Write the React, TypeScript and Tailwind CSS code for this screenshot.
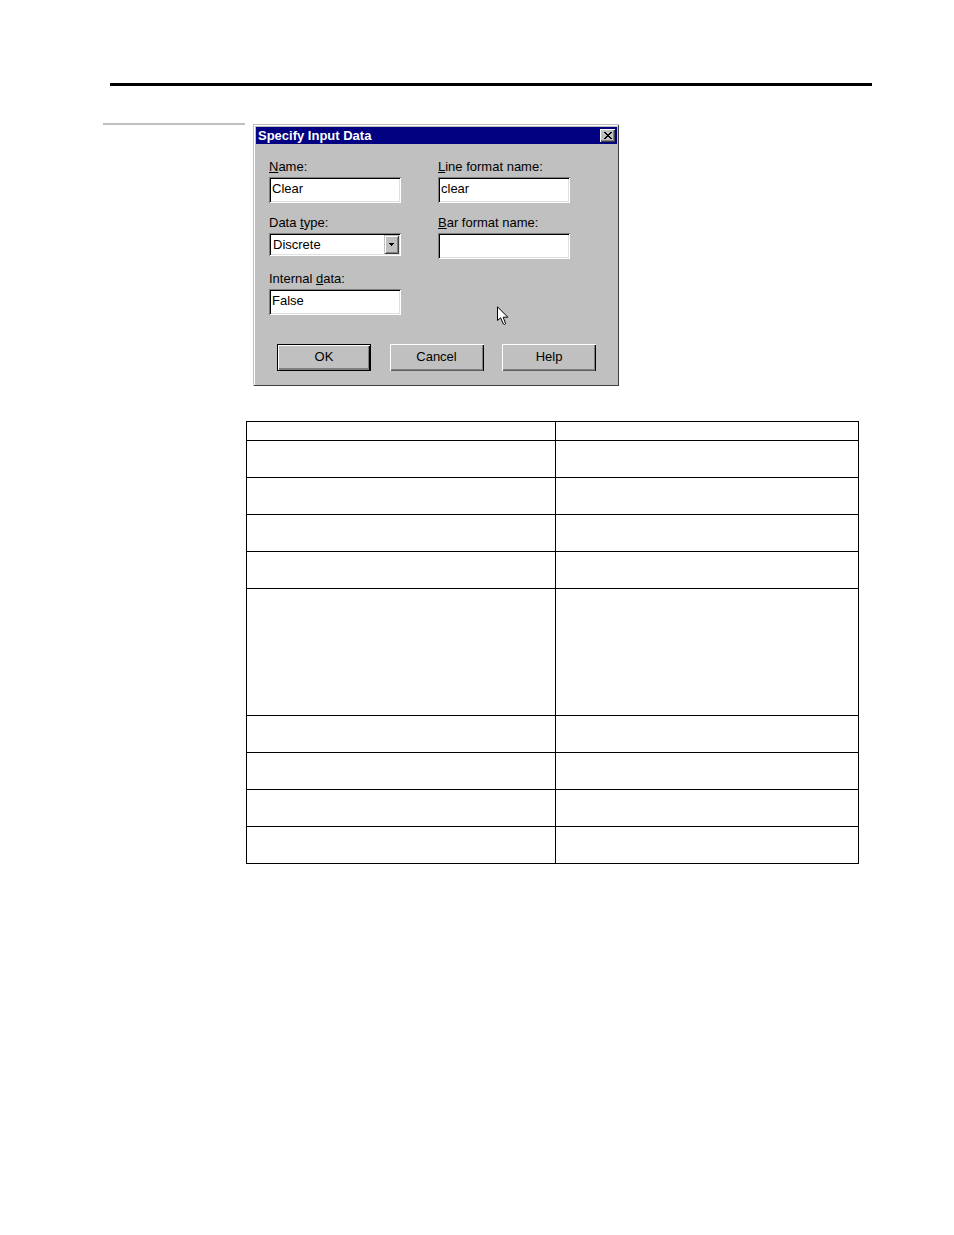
import React from "react";

const fieldClass =
  "h-[26px] w-full rounded-none bg-white pt-0 pr-1 pb-1 pl-[3px] text-[13px] leading-4 text-black outline-none shadow-[inset_1px_1px_0_#808080,inset_-1px_-1px_0_#ffffff,inset_2px_2px_0_#000000,inset_-2px_-2px_0_#dfdfdf]";

const buttonBase = "flex h-[27px] w-[94px] items-center justify-center pb-0.5 text-[13px] leading-4 text-black";
const raised =
  "shadow-[inset_1px_1px_0_#ffffff,inset_-1px_0_0_#000000,inset_0_-1px_0_#606060,inset_-2px_-2px_0_#808080]";
const raisedDefault =
  "border border-black shadow-[inset_1px_1px_0_#ffffff,inset_-1px_0_0_#000000,inset_0_-1px_0_#808080,inset_-2px_-2px_0_#808080]";

interface FieldProps {
  id: string;
  label: React.ReactNode;
  children: React.ReactNode;
}

function Field({ id, label, children }: FieldProps) {
  return (
    <div className="flex flex-col gap-0.5">
      <label htmlFor={id} className="text-[13px] leading-4">
        {label}
      </label>
      {children}
    </div>
  );
}

function Pointer() {
  return (
    <svg
      className="pointer-events-none absolute top-[182px] left-[244px]"
      width="12"
      height="20"
      viewBox="0 0 12 20"
      aria-hidden="true"
    >
      <path
        d="M0.5 0.8 V14.5 L3.6 11.8 L6.4 18 Q7.5 19 8.6 17.8 L6.2 11.2 H10.8 Z"
        fill="#fff"
        stroke="#000"
        strokeWidth="1"
      />
    </svg>
  );
}

function Dialog() {
  return (
    <section
      role="dialog"
      aria-labelledby="dialog-title"
      className="relative w-[366px] bg-[#c0c0c0] p-[3px] shadow-[inset_1px_1px_0_#c0c0c0,inset_-1px_-1px_0_#404040,inset_2px_2px_0_#ffffff]"
    >
      <header className="mr-[-1px] flex h-[17px] items-center justify-between bg-[#000080] px-0.5">
        <h1 id="dialog-title" className="text-[13px] leading-4 font-bold text-white">
          Specify Input Data
        </h1>
        <button
          type="button"
          aria-label="Close"
          className="flex h-[13px] w-[15px] items-center justify-center bg-[#c0c0c0] shadow-[inset_1px_1px_0_#ffffff,inset_-1px_-1px_0_#404040,inset_-2px_-2px_0_#808080]"
        >
          <svg width="8" height="7" viewBox="0 0 8 7" shapeRendering="crispEdges" aria-hidden="true">
            <path
              d="M0 0h2v1h-2zM6 0h2v1h-2zM1 1h2v1h-2zM5 1h2v1h-2zM2 2h4v1h-4zM3 3h2v1h-2zM2 4h4v1h-4zM1 5h2v1h-2zM5 5h2v1h-2zM0 6h2v1h-2zM6 6h2v1h-2z"
              fill="#000"
            />
          </svg>
        </button>
      </header>

      <form className="pt-[15px] pb-3" onSubmit={(event) => event.preventDefault()}>
        <div className="grid grid-cols-[132px_132px] gap-x-[37px] gap-y-3 pl-[13px]">
          <Field id="name" label={<><u>N</u>ame:</>}>
            <input id="name" type="text" defaultValue="Clear" className={fieldClass} />
          </Field>
          <Field id="line-format" label={<><u>L</u>ine format name:</>}>
            <input id="line-format" type="text" defaultValue="clear" className={fieldClass} />
          </Field>
          <Field id="data-type" label={<>Data <u>t</u>ype:</>}>
            <div className="relative">
              <select
                id="data-type"
                defaultValue="Discrete"
                className="block h-[23px] w-full appearance-none rounded-none bg-white pr-5 pl-1 text-[13px] leading-4 text-black outline-none shadow-[inset_1px_1px_0_#808080,inset_-1px_-1px_0_#ffffff,inset_2px_2px_0_#000000,inset_-2px_-2px_0_#dfdfdf]"
              >
                <option>Discrete</option>
              </select>
              <span className="pointer-events-none absolute top-0.5 right-0.5 bottom-0.5 flex w-[15px] items-center justify-center bg-[#c0c0c0] shadow-[inset_1px_1px_0_#c0c0c0,inset_-1px_-1px_0_#404040,inset_2px_2px_0_#ffffff,inset_-2px_-2px_0_#808080]">
                <svg width="5" height="3" viewBox="0 0 5 3" shapeRendering="crispEdges" aria-hidden="true">
                  <path d="M0 0h5v1h-5zM1 1h3v1h-3zM2 2h1v1h-1z" fill="#000" />
                </svg>
              </span>
            </div>
          </Field>
          <Field id="bar-format" label={<><u>B</u>ar format name:</>}>
            <input id="bar-format" type="text" defaultValue="" className={fieldClass} />
          </Field>
          <Field id="internal-data" label={<>Internal <u>d</u>ata:</>}>
            <input id="internal-data" type="text" defaultValue="False" className={fieldClass} />
          </Field>
        </div>

        <div className="flex justify-between pt-[29px] pr-5 pl-[21px]">
          <button type="submit" className={`${buttonBase} ${raisedDefault}`}>OK</button>
          <button type="button" className={`${buttonBase} ${raised}`}>Cancel</button>
          <button type="button" className={`${buttonBase} ${raised}`}>Help</button>
        </div>
      </form>
      <Pointer />
    </section>
  );
}

const rowHeights = [
  "h-[19px]",
  "h-[37px]",
  "h-[37px]",
  "h-[37px]",
  "h-[37px]",
  "h-[127px]",
  "h-[37px]",
  "h-[37px]",
  "h-[37px]",
  "h-[37px]",
];

export default function App() {
  return (
    <main className="min-h-screen bg-white pt-[83px] font-['Liberation_Sans',Arial,sans-serif] text-black">
      <hr className="mr-[82px] ml-[110px] h-[3px] border-0 bg-black" />
      <div className="mt-[37px] flex pl-[103px]">
        <aside className="w-[142px] shrink-0 border-t-2 border-[#c0c0c0]" />
        <div className="flex-1 pt-px pr-[95px] pl-px">
          <div className="pl-[7px]">
            <Dialog />
          </div>
          <table className="mt-[35px] w-full table-fixed border-collapse">
            <colgroup>
              <col className="w-[50.5%]" />
              <col />
            </colgroup>
            <tbody>
              {rowHeights.map((height, index) => (
                <tr key={index} className={height}>
                  <td className="border border-black p-0" />
                  <td className="border border-black p-0" />
                </tr>
              ))}
            </tbody>
          </table>
        </div>
      </div>
    </main>
  );
}
